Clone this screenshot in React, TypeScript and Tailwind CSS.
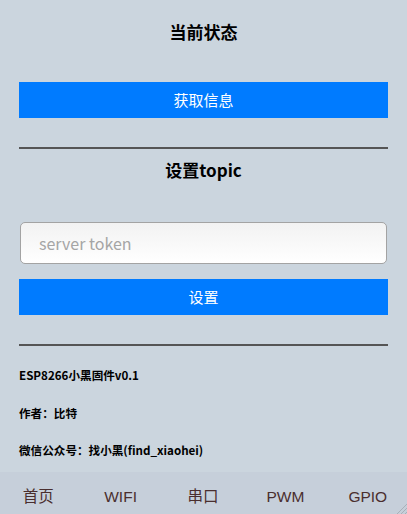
import React from "react";

const tabs = ["首页", "WIFI", "串口", "PWM", "GPIO"];

export default function App() {
  return (
    <div className="min-h-[514px] bg-[#cbd5de] font-['Noto_Sans_CJK_SC',sans-serif] text-black">
      <div className="px-[19px] pt-[20px]">
        {/* 当前状态 */}
        <h3 className="text-center text-[17px] font-bold leading-[24px]">当前状态</h3>
        <button className="mt-[38px] block h-[36px] w-full bg-[#007bff] text-[15px] text-white">
          获取信息
        </button>

        <div className="mt-[29px] border-t-2 border-[#555]" />

        {/* 设置topic */}
        <h3 className="mt-[9px] text-center text-[17px] font-bold leading-[24px]">设置topic</h3>
        <div className="mx-[1px] mt-[40px]">
          <input
            placeholder="server token"
            className="block h-[42px] w-full rounded-[5px] border border-[#a3a3a3] bg-gradient-to-b from-[#f2f2f2] to-white pl-[18px] text-[16px] outline-none placeholder:text-[#a5a5a5]"
          />
        </div>
        <button className="mt-[15px] block h-[36px] w-full bg-[#007bff] text-[15px] text-white">
          设置
        </button>

        <div className="mt-[29px] border-t-2 border-[#555]" />

        {/* 关于 */}
        <p className="mt-[21px] text-[11.6px] font-bold leading-[16px]">ESP8266小黑固件v0.1</p>
        <p className="mt-[22px] text-[11.6px] font-bold leading-[16px]">作者：比特</p>
        <p className="mt-[21px] text-[11.6px] font-bold leading-[16px]">微信公众号：找小黑(find_xiaohei)</p>
      </div>

      <nav className="relative mt-[14px] h-[50px] overflow-hidden bg-[#c6cfda] font-['Liberation_Sans','Noto_Sans_CJK_SC',sans-serif] text-[15.5px] text-[#4a2e2e]">
        <div className="-ml-[3px] grid h-full w-[412px] grid-cols-5">
          {tabs.map((t) => (
            <div key={t} className="flex items-center justify-center">
              {t}
            </div>
          ))}
        </div>
        <svg className="absolute right-0 top-[30px]" width="12" height="12" viewBox="0 0 12 12">
          <path d="M12 2 L2 12 M12 6 L6 12 M12 10 L10 12" stroke="#a9b0b8" strokeWidth="1" />
        </svg>
      </nav>
    </div>
  );
}
